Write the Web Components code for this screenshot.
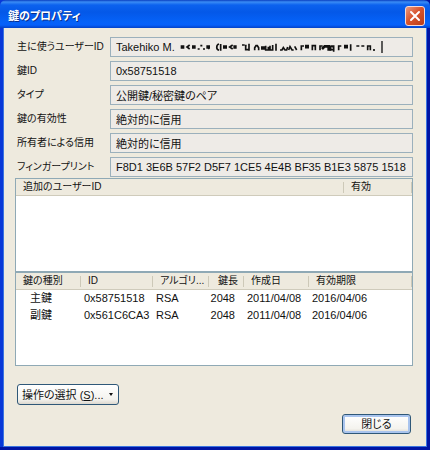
<!DOCTYPE html>
<html lang="ja">
<head>
<meta charset="utf-8">
<title>鍵のプロパティ</title>
<style>
  body {
    margin: 0;
    font-family: "Liberation Sans", "Noto Sans CJK JP", sans-serif;
    font-size: 11px;
    line-height: 16px;
    font-feature-settings: "palt";
    color: #111;
  }
</style>
</head>
<body>
<key-window heading="鍵のプロパティ">
  <key-field label="主に使うユーザーID" value="Takehiko M.">
    <svg width="204" height="12" viewBox="0 0 612 36" fill="none" stroke="#111" stroke-width="5" aria-hidden="true">
      <path d="M2 18h11M36 18h11M79 18h11" stroke-width="10"/>
      <path d="M29 12l-8 6 8 6M53 24h6M61 14h6M69 24h6M84 22h4"/>
      <path d="M117 9c-9 3-9 16 0 19M122 9v20M158 12l-9 6 9 6M186 12h8M207 8v21M200 14h-3v12h8"/>
      <path d="M129 18h12M160 18h10M243 21h12M375 17h12M492 17h12" stroke-width="11"/>
      <path d="M224 28v-8l4-6h4l4 6v8M257 14v13h8v-10M270 14v13h8V12M288 8v21"/>
      <path d="M300 27h6l4-7 5 7h5l3-9M326 27l4-10 6 10h5M344 16l6 11"/>
      <path d="M364 28V15h8M397 28V14h9v14M420 28V15h8M476 28V15h8M512 10v19"/>
      <path d="M426 24l8-8h12v9h8" stroke-width="8"/>
      <path d="M451 15h10v17M459 17h-8v9h8M529 15h9M544 15h9M563 28V15h8v13M582 24v6"/>
      <path d="M606 0v36" stroke-width="4"/>
    </svg>
  </key-field>
  <key-field label="鍵ID" value="0x58751518"></key-field>
  <key-field label="タイプ" value="公開鍵/秘密鍵のペア"></key-field>
  <key-field label="鍵の有効性" value="絶対的に信用"></key-field>
  <key-field label="所有者による信用" value="絶対的に信用"></key-field>
  <key-field label="フィンガープリント" value="F8D1 3E6B 57F2 D5F7 1CE5 4E4B BF35 B1E3 5875 1518"></key-field>
  <user-id-list slot="lists"></user-id-list>
  <subkey-list slot="lists"></subkey-list>
  <xp-button slot="actions" menu>操作の選択 (<u>S</u>)...</xp-button>
  <xp-button slot="footer" primary>閉じる</xp-button>
</key-window>

<script>
class KeyWindow extends HTMLElement {
  constructor() {
    super();
    this.attachShadow({ mode: "open" });
    this.shadowRoot.innerHTML = `
      <style>
        :host {
          display: flex;
          flex-direction: column;
          box-sizing: border-box;
          min-height: 100vh;
          background: linear-gradient(90deg, #0838d8 50%, #0014a4 50%);
        }

        header {
          display: flex;
          align-items: center;
          justify-content: space-between;
          height: 28px;
          padding: 0 5px 0 8px;
          border-radius: 6px 6px 0 0;
          background: linear-gradient(#0a3fc0 0, #3a8cf5 2px, #0c62ee 5px, #0458e8 12px, #0562f8 22px, #0660fa 25px, #0342c8 28px);
          color: #fff;
        }

        h1 {
          margin: 0;
          font-size: 11px;
          line-height: 20px;
          padding-top: 3px;
          text-shadow: 1px 1px #0a2f8c;
        }

        #close {
          display: flex;
          align-items: center;
          justify-content: center;
          width: 20px;
          height: 20px;
          margin-top: 3px;
          padding: 0;
          border: 1px solid #f3d9d6;
          border-radius: 3px;
          background: linear-gradient(135deg, #eb9a80, #d8552f 45%, #b93c17);
        }

        main {
          flex: 1;
          display: flex;
          flex-direction: column;
          margin: 0 3px;
          padding: 9px 13px 12px 11px;
          border: 1px solid #3a74e0;
          border-top: 0;
          background: #eeeade;
        }

        #edge {
          height: 3px;
          background: #0014a4;
        }

        #fields {
          display: grid;
          gap: 4px;
        }

        #lists {
          padding-top: 1px;
        }

        #actions {
          padding: 18px 0 0 2px;
        }

        footer {
          display: flex;
          justify-content: flex-end;
          margin-top: auto;
          padding-right: 2px;
        }
      </style>
      <header>
        <h1></h1>
        <button id="close" aria-label="閉じる">
          <svg width="12" height="12" viewBox="0 0 12 12" stroke="#fff" stroke-width="2" stroke-linecap="round">
            <path d="M2 2l8 8M10 2l-8 8"/>
          </svg>
        </button>
      </header>
      <main>
        <div id="fields"><slot></slot></div>
        <div id="lists"><slot name="lists"></slot></div>
        <div id="actions"><slot name="actions"></slot></div>
        <footer><slot name="footer"></slot></footer>
      </main>
      <div id="edge"></div>
    `;
    this.shadowRoot.querySelector("h1").textContent = this.getAttribute("heading");
  }
}

class KeyField extends HTMLElement {
  constructor() {
    super();
    this.attachShadow({ mode: "open" });
    this.shadowRoot.innerHTML = `
      <style>
        :host {
          display: grid;
          grid-template-columns: 95px 1fr;
          align-items: center;
        }

        label {
          padding-left: 2px;
          font-size: 10px;
          white-space: nowrap;
        }

        #box {
          position: relative;
        }

        input {
          display: block;
          box-sizing: border-box;
          width: 100%;
          height: 20px;
          padding: 0 5px;
          border: 1px solid #9bb0bc;
          background: #eeebe7;
          font: inherit;
          font-feature-settings: inherit;
          color: inherit;
          outline: 0;
        }

        /* ink drawn over the masked part of the value */
        ::slotted(svg) {
          position: absolute;
          left: 70px;
          top: 4px;
        }
      </style>
      <label for="value"></label>
      <div id="box">
        <input id="value" type="text" readonly>
        <slot></slot>
      </div>
    `;
    this.shadowRoot.querySelector("label").textContent = this.getAttribute("label");
    this.shadowRoot.querySelector("input").value = this.getAttribute("value");
  }
}

const listStyle = `
  :host {
    display: block;
    box-sizing: border-box;
    height: 94px;
    border: 1px solid #8fa9b5;
    background: #fff;
  }

  table {
    width: 100%;
    table-layout: fixed;
    border-collapse: separate;
    border-spacing: 0;
  }

  th, td {
    height: 17px;
    line-height: 17px;
    padding: 0;
    text-align: left;
    font-weight: normal;
    white-space: nowrap;
  }

  th {
    height: 16px;
    line-height: 16px;
    padding-left: 7px;
    font-size: 10px;
    border-bottom: 1px solid #cfcbbb;
    background: linear-gradient(90deg, transparent calc(100% - 1px), #cdc9b8 0) 0 3px / 100% 11px no-repeat #eeeade;
  }

  td {
    padding-left: 3px;
  }
`;

class UserIdList extends HTMLElement {
  constructor() {
    super();
    this.attachShadow({ mode: "open" });
    this.shadowRoot.innerHTML = `
      <style>
        ${listStyle}
      </style>
      <table>
        <colgroup><col><col style="width: 68px"></colgroup>
        <thead>
          <tr><th>追加のユーザーID</th><th>有効</th></tr>
        </thead>
      </table>
    `;
  }
}

class SubkeyList extends HTMLElement {
  constructor() {
    super();
    const rows = [
      ["主鍵", "0x58751518", "RSA", "2048", "2011/04/08", "2016/04/06"],
      ["副鍵", "0x561C6CA3", "RSA", "2048", "2011/04/08", "2016/04/06"],
    ];
    this.attachShadow({ mode: "open" });
    this.shadowRoot.innerHTML = `
      <style>
        ${listStyle}

        td:first-child {
          padding-left: 14px;
        }

        th:nth-child(4), td:nth-child(4) {
          padding: 0 6px 0 0;
          text-align: right;
        }

        td:nth-child(4) {
          padding-right: 9px;
        }
      </style>
      <table>
        <colgroup>
          <col style="width: 65px"><col style="width: 72px"><col style="width: 56px">
          <col style="width: 35px"><col style="width: 65px"><col>
        </colgroup>
        <thead>
          <tr><th>鍵の種別</th><th>ID</th><th>アルゴリ...</th><th>鍵長</th><th>作成日</th><th>有効期限</th></tr>
        </thead>
        <tbody>
          ${rows.map((row) => `<tr>${row.map((cell) => `<td>${cell}</td>`).join("")}</tr>`).join("")}
        </tbody>
      </table>
    `;
  }
}

class XpButton extends HTMLElement {
  constructor() {
    super();
    this.attachShadow({ mode: "open" });
    this.shadowRoot.innerHTML = `
      <style>
        :host {
          display: inline-block;
        }

        button {
          display: flex;
          align-items: center;
          justify-content: center;
          gap: 5px;
          box-sizing: border-box;
          min-width: 69px;
          height: 20px;
          padding: 0 4px;
          border: 1px solid #2f5878;
          border-radius: 3px;
          background: linear-gradient(#fff, #f4f3ee 75%, #dcd8cf);
          font: inherit;
          font-feature-settings: inherit;
          color: inherit;
        }

        :host([menu]) button {
          min-width: 102px;
          height: 21px;
          justify-content: flex-start;
        }

        :host([primary]) button {
          box-shadow: inset 0 0 0 2px #a9c4ee;
        }

        svg {
          display: none;
        }

        :host([menu]) svg {
          display: block;
        }
      </style>
      <button type="button">
        <span><slot></slot></span>
        <svg width="4" height="3" viewBox="0 0 4 3"><path d="M0 0h4L2 3z" fill="#111"/></svg>
      </button>
    `;
  }
}

customElements.define("key-window", KeyWindow);
customElements.define("key-field", KeyField);
customElements.define("user-id-list", UserIdList);
customElements.define("subkey-list", SubkeyList);
customElements.define("xp-button", XpButton);
</script>
</body>
</html>
